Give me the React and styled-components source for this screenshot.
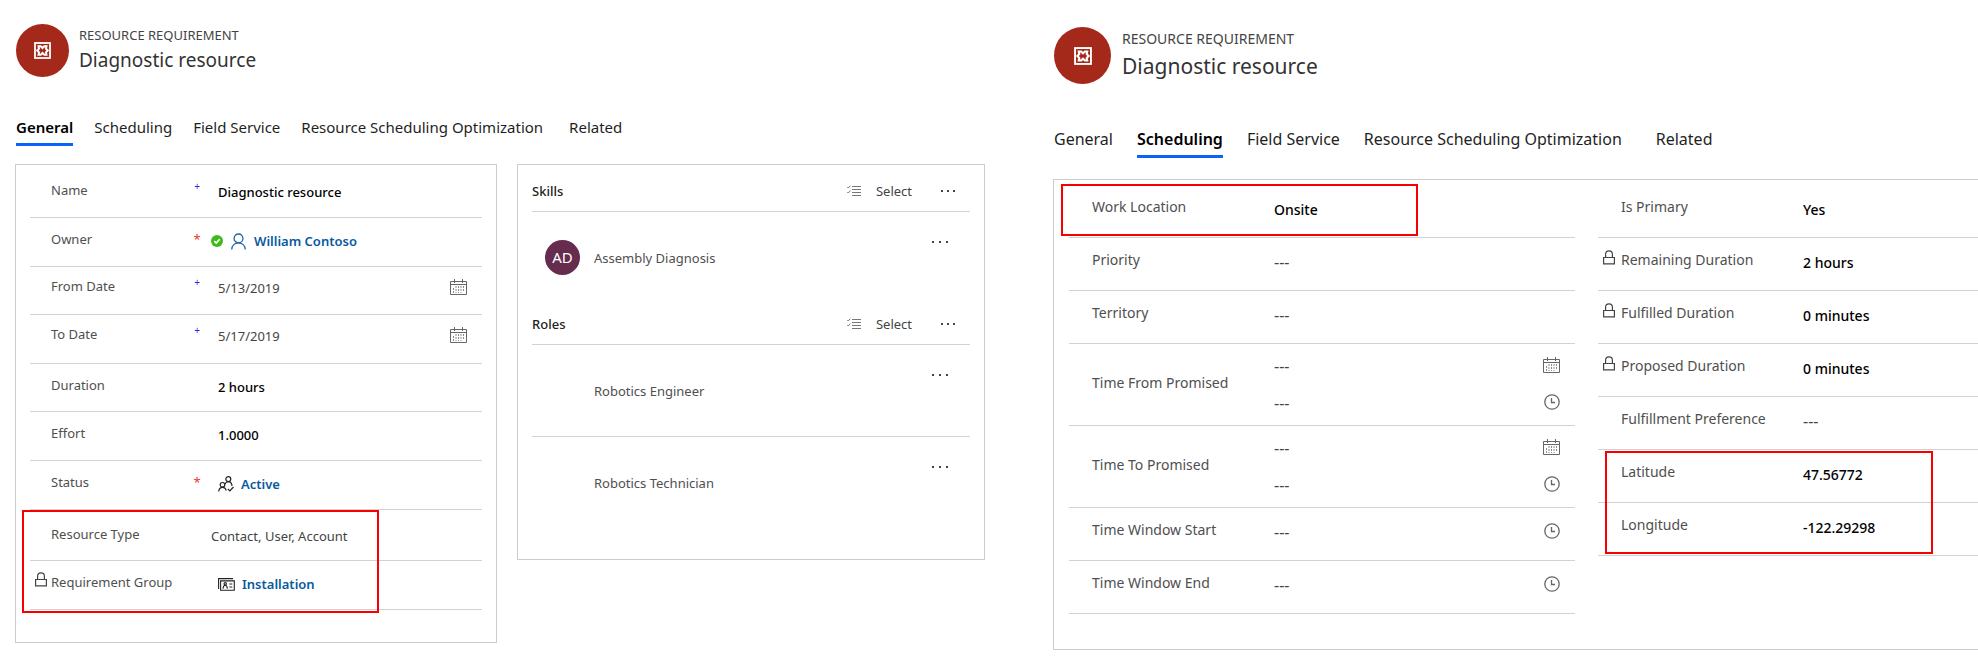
import React from 'react';
import styled, { createGlobalStyle, css, ThemeProvider } from 'styled-components';

const GlobalStyle = createGlobalStyle`
  *, *::before, *::after { box-sizing: border-box; }
  body {
    margin: 0;
    background: #fff;
    color: #4f4f4f;
    font-family: "Noto Sans", "Open Sans", sans-serif;
  }
  button, input { font: inherit; color: inherit; }
  h1, p, ul { margin: 0; padding: 0; }
`;

const compact = {
  top: '24px', badge: '53px', badgeGap: '10px', glyph: 17,
  kicker: '13px', kickerLine: '20px', title: '19px', titleLine: '31px',
  tab: '15px', tabLine: '22px', tabGap: '21px', lastTab: '5px', tabsTop: '39px', tabsBottom: '18px',
  text: '13px', columns: '21px 139px 14px minmax(0, 1fr)', valuePad: '14px',
  row: '49px', rowPad: '11px', edge: '15px',
};

const roomy = {
  top: '27px', badge: '57px', badgeGap: '11px', glyph: 18,
  kicker: '14px', kickerLine: '22px', title: '21px', titleLine: '33px',
  tab: '16px', tabLine: '26px', tabGap: '24px', lastTab: '10px', tabsTop: '42px', tabsBottom: '21px',
  text: '14px', columns: '23px 167px 14px minmax(0, 1fr)', valuePad: '1px',
  row: '53px', rowPad: '12px', edge: '15px',
};

/* ---------- page frame ---------- */

const Page = styled.main`
  display: grid;
  grid-template-columns: minmax(0, 970fr) minmax(0, 925fr);
  column-gap: 68px;
  align-items: start;
  padding: 0 0 16px 15px;
`;

const View = styled.section`
  padding-top: ${(p) => p.theme.top};
  font-size: ${(p) => p.theme.text};
`;

const Header = styled.header`
  display: flex;
  align-items: center;
  gap: ${(p) => p.theme.badgeGap};
  padding-left: 1px;
`;

const Badge = styled.div`
  display: grid;
  place-items: center;
  flex: none;
  width: ${(p) => p.theme.badge};
  height: ${(p) => p.theme.badge};
  border-radius: 50%;
  background: #a4291a;
`;

const Kicker = styled.p`
  font-size: ${(p) => p.theme.kicker};
  line-height: ${(p) => p.theme.kickerLine};
  color: #444;
`;

const Title = styled.h1`
  font-size: ${(p) => p.theme.title};
  line-height: ${(p) => p.theme.titleLine};
  font-weight: 400;
  color: #333;
`;

const Tabs = styled.nav`
  display: flex;
  gap: ${(p) => p.theme.tabGap};
  margin: ${(p) => p.theme.tabsTop} 0 ${(p) => p.theme.tabsBottom};
  padding-left: 1px;
`;

const Tab = styled.button`
  padding: 0 0 ${(p) => (p.theme === compact ? '5px' : '3px')};
  border: 0;
  border-bottom: 3px solid ${(p) => (p.$active ? '#0b62f5' : 'transparent')};
  background: none;
  font-size: ${(p) => p.theme.tab};
  line-height: ${(p) => p.theme.tabLine};
  font-weight: ${(p) => (p.$active ? 600 : 400)};
  color: ${(p) => (p.$active ? '#000' : '#1f1f1f')};
  white-space: nowrap;
  cursor: pointer;
  &:last-child { margin-left: ${(p) => p.theme.lastTab}; }
`;

/* ---------- cards ---------- */

const Cards = styled.div`
  display: grid;
  grid-template-columns: minmax(0, 482fr) minmax(0, 468fr);
  gap: 20px;
  align-items: start;
`;

const Card = styled.div`
  padding: ${(p) => p.$pad};
  border: 1px solid #ccc;
`;

const OpenCard = styled(Card)`
  display: grid;
  grid-template-columns: minmax(0, 506fr) minmax(0, 380fr);
  column-gap: 23px;
  align-items: start;
  border-right: 0;
`;

/* ---------- form rows ---------- */

const Row = styled.div`
  display: grid;
  grid-template-columns: ${(p) => p.theme.columns};
  align-items: start;
  min-height: ${(p) => p.$height || p.theme.row};
  padding-top: ${(p) => p.$top || p.theme.rowPad};
  border-bottom: 1px solid #d2d2d2;
`;

const LockSlot = styled.span`
  display: flex;
  padding-left: 5px;
`;

const Label = styled.label`
  line-height: 20px;
  white-space: nowrap;
  padding-top: ${(p) => (p.$middle ? '17px' : '0')};
`;

const Marker = styled.span`
  text-align: center;
  ${(p) =>
    p.$kind === 'required'
      ? css`color: #f0352b; font-size: 13px; line-height: 20px;`
      : css`color: #2a2af5; font-size: 10px; line-height: 12px;`}
`;

const Value = styled.div`
  display: flex;
  align-items: center;
  min-height: 20px;
  margin-top: 2px;
  padding-right: ${(p) => p.theme.edge};
  padding-left: ${(p) => (p.$outdent ? '7px' : p.theme.valuePad)};
`;

const Stack = styled.div`
  display: grid;
  row-gap: 15px;
  margin-top: -2px;
`;

const TextInput = styled.input`
  flex: 1;
  min-width: 0;
  height: 20px;
  padding: 0;
  border: 0;
  outline: 0;
  background: none;
  font-weight: ${(p) => (p.$strong ? 500 : 400)};
  color: ${(p) => (p.$strong ? '#000' : '#444')};
  ${(p) => p.$empty && css`font-size: 16px;`}
`;

const RecordLink = styled.a`
  display: inline-flex;
  align-items: center;
  gap: ${(p) => (p.$spaced ? '8px' : '7px')};
  line-height: 20px;
  font-weight: 600;
  color: #075a9e;
  text-decoration: none;
`;

const IconButton = styled.button`
  display: grid;
  place-items: center;
  flex: none;
  width: 17px;
  height: 18px;
  margin-bottom: 2px;
  padding: 0;
  border: 0;
  background: none;
  color: #666;
  cursor: pointer;
`;

const Highlight = styled.div`
  position: relative;
  &::after {
    content: '';
    position: absolute;
    inset: ${(p) => p.$inset};
    border: 2px solid #f80000;
    pointer-events: none;
  }
`;

/* ---------- skills and roles ---------- */

const ListHeader = styled.div`
  display: flex;
  align-items: center;
  height: 47px;
  padding: 5px 15px 0 0;
  border-bottom: 1px solid #d2d2d2;
`;

const ListTitle = styled.h2`
  flex: 1;
  margin: 0;
  font-size: 13px;
  font-weight: 500;
  color: #222;
`;

const SelectButton = styled.button`
  display: flex;
  align-items: center;
  gap: 15px;
  margin-right: 29px;
  padding: 0;
  border: 0;
  background: none;
  color: #444;
  cursor: pointer;
`;

const List = styled.ul`
  list-style: none;
`;

const Item = styled.li`
  display: flex;
  align-items: flex-start;
  gap: 14px;
  min-height: ${(p) => (p.$short ? '86px' : '91px')};
  padding: 20px 22px 0 13px;
  & + & { border-top: 1px solid #d2d2d2; }
`;

const Avatar = styled.span`
  flex: none;
  width: 35px;
  height: 35px;
  margin-top: 8px;
  border-radius: 50%;
  background: ${(p) => (p.$filled ? '#652c4d' : 'transparent')};
  color: #fff;
  font-size: 15px;
  line-height: 35px;
  text-align: center;
`;

const ItemName = styled.span`
  flex: 1;
  margin-top: 8px;
  line-height: 36px;
`;

const MoreButton = styled.button`
  display: flex;
  align-items: center;
  gap: ${(p) => (p.$wide ? '5px' : '4px')};
  height: 20px;
  padding: 0;
  border: 0;
  background: none;
  cursor: pointer;
`;

const Dot = styled.span`
  width: 2px;
  height: 2px;
  background: #444;
`;

/* ---------- icons ---------- */

const EntityIcon = ({ size }) => (
  <svg width={size} height={size} viewBox="0 0 17 17" fill="none" stroke="#fff" aria-hidden="true">
    <rect x="1" y="1" width="15" height="15" strokeWidth="1.8" />
    <path strokeWidth="2" d="M3.200 8.500 5 6.600 4.500 4.200h2.200L8.500 6 10.300 4.200h2.200L12 6.600l1.800 1.900L12 10.400l.5 2.400h-2.200L8.500 11 6.700 12.800H4.500L5 10.400Z" />
  </svg>
);

const CalendarIcon = () => (
  <svg width="17" height="16" viewBox="0 0 17 16" fill="none" stroke="currentColor" aria-hidden="true">
    <path d="M.5 2.5h16v13H.5ZM.5 5.5h16M4.500 0v4M12.500 0v4" />
    <path d="M3.500 9v5M6 7v7M8.500 7v7M11 7v7M13.500 7v5" strokeDasharray="2 1" opacity=".75" />
  </svg>
);

const ClockIcon = () => (
  <svg width="16" height="16" viewBox="0 0 16 16" fill="none" stroke="currentColor" strokeWidth="1.3" aria-hidden="true">
    <circle cx="8" cy="8" r="7.2" />
    <path d="M7.500 4v4.500H11" />
  </svg>
);

const LockIcon = () => (
  <svg width="12" height="15" viewBox="0 0 12 15" fill="none" stroke="#444" strokeWidth="1.2" aria-hidden="true">
    <path d="M.6 7.500h10.800v6.400H.6ZM2.600 7.500V4.200a3.400 3.400 0 0 1 6.800 0v3.300" />
  </svg>
);

const CheckIcon = () => (
  <svg width="12" height="12" viewBox="0 0 12 12" aria-hidden="true">
    <circle cx="6" cy="6" r="6" fill="#3dbb1c" />
    <path d="M3.300 6.100 5.200 8l3.600-3.900" fill="none" stroke="#fff" strokeWidth="1.6" />
  </svg>
);

const PersonIcon = () => (
  <svg width="15" height="17" viewBox="0 0 15 17" fill="none" stroke="#1d66a5" strokeWidth="1.3" aria-hidden="true">
    <circle cx="7.500" cy="5.400" r="4.400" />
    <path d="M.7 16.500c.3-4 3-6.700 6.800-6.700s6.500 2.700 6.800 6.700" />
  </svg>
);

const TeamIcon = () => (
  <svg width="16" height="16" viewBox="0 0 16 16" fill="none" stroke="#222" strokeWidth="1.2" aria-hidden="true">
    <circle cx="10.300" cy="3.100" r="2.500" />
    <circle cx="4.500" cy="8.800" r="2.300" />
    <path d="M.7 15.500c.2-2.600 1.700-4.200 3.800-4.200s3.400 1.500 3.700 3.300M7 8c.7-1.500 1.900-2.300 3.300-2.300 1.900 0 3.500 1.600 3.700 4.300M9.800 12.900l2 2 3.700-3.900" />
  </svg>
);

const CardIcon = () => (
  <svg width="17" height="13" viewBox="0 0 17 13" fill="none" stroke="#222" strokeWidth="1.1" aria-hidden="true">
    <path d="M.6 11V.6h14.400M2.600 2.900h13.700v9.400H2.600Z" />
    <circle cx="7.200" cy="5.800" r="1.200" />
    <path d="M5 10.600c.2-2.200 1-3.400 2.200-3.400s2 1.200 2.200 3.400M11.300 6h3M11.300 9h3" />
  </svg>
);

const ChecklistIcon = () => (
  <svg width="14" height="11" viewBox="0 0 14 11" fill="none" stroke="#777" aria-hidden="true">
    <path d="M5 1.500h9M5 4.500h9M5 7.500h9M5 10.500h9M.3 2l1 1L3.300.7M.3 7l1 1 2-2.300" />
  </svg>
);

/* ---------- composed parts ---------- */

const TABS = ['General', 'Scheduling', 'Field Service', 'Resource Scheduling Optimization', 'Related'];

const FormHeader = ({ active, glyph }) => (
  <>
    <Header>
      <Badge><EntityIcon size={glyph} /></Badge>
      <div>
        <Kicker>RESOURCE REQUIREMENT</Kicker>
        <Title>Diagnostic resource</Title>
      </div>
    </Header>
    <Tabs>
      {TABS.map((name) => (
        <Tab key={name} type="button" $active={name === active}>{name}</Tab>
      ))}
    </Tabs>
  </>
);

const Picker = ({ kind, label }) => (
  <IconButton type="button" aria-label={`${label}: choose ${kind}`}>
    {kind === 'date' ? <CalendarIcon /> : <ClockIcon />}
  </IconButton>
);

const Field = ({ label, value, strong, locked, marker, picker, outdent, height, top, children }) => {
  const id = label.toLowerCase().replace(/ /g, '-');
  return (
    <Row $height={height} $top={top}>
      <LockSlot>{locked && <LockIcon />}</LockSlot>
      <Label htmlFor={id}>{label}</Label>
      <Marker $kind={marker}>{marker === 'required' ? '*' : marker ? '+' : ''}</Marker>
      <Value $outdent={outdent}>
        {children ? children(id) : (
          <TextInput id={id} defaultValue={value} $strong={strong} $empty={value === '---'} readOnly={locked} />
        )}
        {picker && <Picker kind={picker} label={label} />}
      </Value>
    </Row>
  );
};

const DateTimeField = ({ label }) => {
  const id = label.toLowerCase().replace(/ /g, '-');
  return (
    <Row $height="82px">
      <span />
      <Label htmlFor={id} $middle>{label}</Label>
      <span />
      <Stack>
        <Value>
          <TextInput id={id} defaultValue="---" $empty />
          <Picker kind="date" label={label} />
        </Value>
        <Value>
          <TextInput aria-label={`${label} time`} defaultValue="---" $empty />
          <Picker kind="time" label={label} />
        </Value>
      </Stack>
    </Row>
  );
};

const More = ({ wide, label }) => (
  <MoreButton type="button" $wide={wide} aria-label={label}>
    <Dot /><Dot /><Dot />
  </MoreButton>
);

const RecordList = ({ title, items, short }) => (
  <section>
    <ListHeader>
      <ListTitle>{title}</ListTitle>
      <SelectButton type="button"><ChecklistIcon />Select</SelectButton>
      <More label={`More ${title} commands`} />
    </ListHeader>
    <List>
      {items.map((item) => (
        <Item key={item.name} $short={short}>
          <Avatar $filled={!!item.initials}>{item.initials}</Avatar>
          <ItemName>{item.name}</ItemName>
          <More wide label={`More for ${item.name}`} />
        </Item>
      ))}
    </List>
  </section>
);

const GeneralView = () => (
  <ThemeProvider theme={compact}>
    <View>
      <FormHeader active="General" glyph={compact.glyph} />
      <Cards>
        <Card $pad="4px 14px 32px">
          <Field label="Name" value="Diagnostic resource" strong marker="recommended" />
          <Field label="Owner" marker="required" outdent>
            {(id) => (
              <RecordLink id={id} href="#owner" $spaced><CheckIcon /><PersonIcon />William Contoso</RecordLink>
            )}
          </Field>
          <Field label="From Date" value="5/13/2019" marker="recommended" picker="date" height="48px" top="9px" />
          <Field label="To Date" value="5/17/2019" marker="recommended" picker="date" top="9px" />
          <Field label="Duration" value="2 hours" strong height="48px" />
          <Field label="Effort" value="1.0000" strong />
          <Field label="Status" marker="required">
            {(id) => <RecordLink id={id} href="#status"><TeamIcon />Active</RecordLink>}
          </Field>
          <Highlight $inset="0 103px -3px -8px">
            <Field label="Resource Type" value="Contact, User, Account" outdent height="51px" top="14px" />
            <Field label="Requirement Group" locked>
              {(id) => <RecordLink id={id} href="#group"><CardIcon />Installation</RecordLink>}
            </Field>
          </Highlight>
        </Card>
        <Card $pad="0 14px 32px">
          <RecordList title="Skills" short items={[{ name: 'Assembly Diagnosis', initials: 'AD' }]} />
          <RecordList title="Roles" items={[{ name: 'Robotics Engineer' }, { name: 'Robotics Technician' }]} />
        </Card>
      </Cards>
    </View>
  </ThemeProvider>
);

const SchedulingView = () => (
  <ThemeProvider theme={roomy}>
    <View>
      <FormHeader active="Scheduling" glyph={roomy.glyph} />
      <OpenCard $pad="5px 0 35px 15px">
        <div>
          <Highlight $inset="-1px 157px 2px -8px">
            <Field label="Work Location" value="Onsite" strong />
          </Highlight>
          <Field label="Priority" value="---" />
          <Field label="Territory" value="---" />
          <DateTimeField label="Time From Promised" />
          <DateTimeField label="Time To Promised" />
          <Field label="Time Window Start" value="---" picker="time" />
          <Field label="Time Window End" value="---" picker="time" />
        </div>
        <div>
          <Field label="Is Primary" value="Yes" strong />
          <Field label="Remaining Duration" value="2 hours" strong locked />
          <Field label="Fulfilled Duration" value="0 minutes" strong locked />
          <Field label="Proposed Duration" value="0 minutes" strong locked />
          <Field label="Fulfillment Preference" value="---" />
          <Highlight $inset="1px 45px 2px 7px">
            <Field label="Latitude" value="47.56772" strong />
            <Field label="Longitude" value="-122.29298" strong />
          </Highlight>
        </div>
      </OpenCard>
    </View>
  </ThemeProvider>
);

export default function App() {
  return (
    <>
      <GlobalStyle />
      <Page>
        <GeneralView />
        <SchedulingView />
      </Page>
    </>
  );
}
